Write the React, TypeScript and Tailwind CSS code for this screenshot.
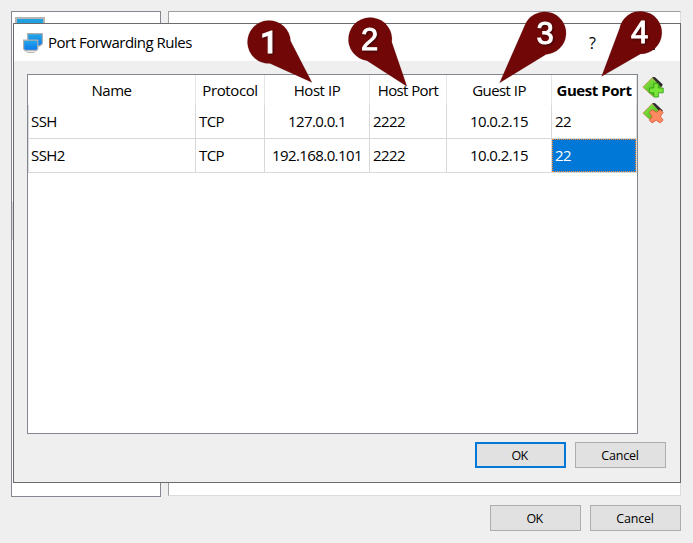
import React from "react";

const font = "font-['Open_Sans','Noto_Sans',sans-serif]";

function Button({ label, primary = false }: { label: string; primary?: boolean }) {
  return (
    <button
      className={`flex h-[26px] w-[91px] items-center justify-center bg-[#e1e1e1] pt-[2px] text-[12.5px] leading-none text-black ${
        primary ? "border-2 border-[#0078d7]" : "border border-[#adadad]"
      }`}
    >
      <span className={label === "OK" ? "pr-[2px] tracking-[-0.8px]" : "pr-px tracking-[-0.2px]"}>{label}</span>
    </button>
  );
}

function Monitors() {
  return (
    <svg width="20" height="20" viewBox="0 0 20 20" className="shrink-0">
      <defs>
        <linearGradient id="screen" x1="0" y1="0" x2="0" y2="1">
          <stop offset="0" stopColor="#25a8e8" />
          <stop offset="1" stopColor="#0879ed" />
        </linearGradient>
      </defs>
      <path d="M4.6.6h14.8v10.2l-2.6 2.1h-3l-1 1H5z" fill="url(#screen)" stroke="#b0b0b0" strokeWidth="1.2" />
      <path d="M.6 7.2h14.2v8.6l-1.2 1.5H1.8L.6 15.8z" fill="url(#screen)" stroke="#b0b0b0" strokeWidth="1.2" />
      <path d="M2.4 17.8h10.2l-1.8 1.7H4.4z" fill="#fff" stroke="#b0b0b0" strokeWidth=".9" />
    </svg>
  );
}

function RuleIcon({ kind }: { kind: "add" | "remove" }) {
  return (
    <svg width="22" height="21" viewBox="0 0 22 21">
      <defs>
        <linearGradient id="leaf" x1="0" y1="0" x2="1" y2="1">
          <stop offset="0" stopColor="#91ed48" />
          <stop offset="1" stopColor="#36a912" />
        </linearGradient>
      </defs>
      <path d="M.9 10.2 10 .8l9.5 8.7-8.6 9.7z" fill="url(#leaf)" stroke="#c98a50" strokeWidth=".8" />
      <path d="M10 .3 12.8 0l8 7.6-1.6 2.6z" fill="#292c29" />
      {kind === "add" ? (
        <path
          d="M11.8 6.6h4.6v4.4h4.8v4.8h-4.8V20h-4.6v-4.2H7.4V11h4.4z"
          fill="#79e637"
          stroke="#299711"
          strokeWidth=".8"
          strokeLinejoin="round"
        />
      ) : (
        <path
          d="m10 6.6 4.2 2.7 4-2.7 2.9 2.9-2.7 3.9 2.7 3.8-2.9 2.7-4-2.7-4.2 2.7-2.6-2.7 2.7-3.8-2.7-3.9z"
          fill="#ff8a61"
          stroke="#d45230"
          strokeWidth=".8"
          strokeLinejoin="round"
        />
      )}
    </svg>
  );
}

const columns = [
  { name: "Name", head: "tracking-[-0.5px]", width: "w-[168px]", center: false },
  { name: "Protocol", head: "tracking-[-0.4px]", width: "w-[69px]", center: false },
  { name: "Host IP", head: "tracking-[-0.45px]", width: "w-[105px]", center: true },
  { name: "Host Port", head: "tracking-[-0.6px]", width: "w-[77px]", center: false },
  { name: "Guest IP", head: "tracking-[-0.55px]", width: "w-[105px]", center: true },
  { name: "Guest Port", head: "font-bold tracking-[-0.45px]", width: "w-[85px]", center: false },
];

const rows = [
  ["SSH", "TCP", "127.0.0.1", "2222", "10.0.2.15", "22"],
  ["SSH2", "TCP", "192.168.0.101", "2222", "10.0.2.15", "22"],
];

function RulesTable() {
  return (
    <div className="h-[360px] w-[611px] border border-[#828790] bg-white text-[15px] leading-none">
      <div className="flex h-[30px]">
        {columns.map((c) => (
          <div
            key={c.name}
            className={`flex shrink-0 items-center justify-center whitespace-nowrap border-r border-[#e5e5e5] ${c.width} ${c.head}`}
          >
            {c.name}
          </div>
        ))}
      </div>
      {rows.map((row, r) => (
        <div key={r} className="flex h-[34px] border-l border-[#d8d8d8]">
          {row.map((value, i) => {
            const selected = r === 1 && i === 5;
            return (
              <div
                key={i}
                className={`flex shrink-0 items-center whitespace-nowrap border-r border-b border-[#d8d8d8] tracking-[-0.6px] ${
                  i === 0 ? "w-[167px]" : columns[i].width
                } ${
                  columns[i].center ? "justify-center pb-px" : selected ? "" : i === 0 ? "pl-[2px] pb-px" : "pl-[3px] pb-px"
                }`}
              >
                {selected ? (
                  <span className="flex h-full w-full items-center border border-dotted border-[#ff8728] bg-[#0078d7] pb-px pl-[2px] text-white">
                    {value}
                  </span>
                ) : (
                  value
                )}
              </div>
            );
          })}
        </div>
      ))}
    </div>
  );
}

function Markers() {
  return (
    <svg className="pointer-events-none absolute left-0 top-0" width="693" height="543">
      <g fill="#720707" stroke="#54383833" strokeWidth=".7">
        <path d="M290.6 41 312 82.5 270 63.6a21.6 21.6 0 1 1 20.6-22.6z" />
        <path d="M391.8 42 407 86.5 367 60.8A21.8 21.8 0 1 1 391.8 42z" />
        <path d="m499.5 83 25-57A21.4 21.4 0 1 1 546 54.5z" />
        <path d="m601.5 76.5 18-48A21.4 21.4 0 1 1 640.5 54z" />
      </g>
      <g
        className="font-['Liberation_Sans',sans-serif] text-[31px] drop-shadow-[1px_1px_1px_rgba(0,0,0,0.5)]"
        fill="#fff"
        stroke="#fff"
        strokeWidth="1"
        textAnchor="middle"
      >
        <text x="269" y="52.5" className="font-['Roboto',sans-serif] font-medium">
          1
        </text>
        <text x="369.5" y="50">2</text>
        <text x="545" y="43.5">3</text>
        <text x="639.5" y="42.5">4</text>
      </g>
    </svg>
  );
}

export default function App() {
  return (
    <main className={`relative h-[543px] w-[693px] overflow-hidden bg-[#efefef] text-black ${font}`}>
      <div className="flex h-[497px] items-start gap-[7px] pl-[11px] pt-[11px]">
        <aside className="h-[486px] w-[150px] border border-[#828790] bg-white pl-[3px] pt-[5px]">
          <div className="h-6 w-[30px] border-2 border-[#b4b4b4] bg-[#20a1e2]" />
          <div className="-ml-[3px] mt-[161px] h-[38px] w-[148px] bg-[#d9d9d9]" />
        </aside>
        <div className="h-[485px] w-[513px] border border-[#dcdcdc] border-t-[#a0a0a0] border-l-[#a0a0a0] bg-white" />
      </div>
      <div className="flex gap-[9px] pl-[490px] pt-2">
        <Button label="OK" />
        <Button label="Cancel" />
      </div>

      <section className="absolute left-[13px] top-[23px] h-[460px] w-[668px] border border-[#6b6b6b] bg-[#efefef]">
        <header className="flex h-[37px] items-center bg-white pl-[9px]">
          <Monitors />
          <h1 className="ml-[5px] whitespace-nowrap text-[15px] leading-none tracking-[-0.5px]">
            Port Forwarding Rules
          </h1>
          <span className="ml-auto text-[16px] leading-none">?</span>
          <span className="ml-[57px] mr-[25px] mt-[13px] h-[2px] w-[2px] bg-[#333]" />
        </header>
        <div className="flex gap-[4px] pl-[13px] pt-[13px]">
          <RulesTable />
          <div className="flex flex-col gap-[5px] pt-[3px]">
            <RuleIcon kind="add" />
            <RuleIcon kind="remove" />
          </div>
        </div>
        <footer className="flex gap-[9px] pl-[461px] pt-2">
          <Button label="OK" primary />
          <Button label="Cancel" />
        </footer>
      </section>
      <Markers />
    </main>
  );
}
